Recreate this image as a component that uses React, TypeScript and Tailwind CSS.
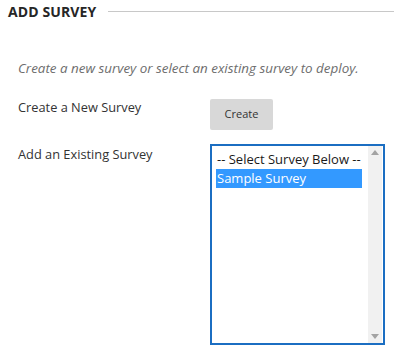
import React from 'react';

const font = { fontFamily: '"Open Sans", "Noto Sans", Arial, sans-serif' };

export default function App() {
  const [selected, setSelected] = React.useState(1);
  const options = ['-- Select Survey Below --', 'Sample Survey'];

  return (
    <div className="w-[394px] h-[355px] bg-white text-[#333]" style={font}>
      {/* Header */}
      <div className="flex items-center pl-[8px] pt-[3px]">
        <h2 className="text-[14px] font-bold uppercase leading-[17px] tracking-[0.1px] text-[#262626]">
          Add Survey
        </h2>
        <div className="ml-[12px] flex-1 h-px bg-[#c8c8c8]" />
      </div>

      <div className="pl-[18px] pt-[39px]">
        <p className="text-[13.4px] italic text-[#6d6d6d] leading-[18px]">
          Create a new survey or select an existing survey to deploy.
        </p>

        {/* Create row */}
        <div className="flex mt-[19px]">
          <div className="w-[192px] text-[12.8px] leading-[18px] pt-[2px]">Create a New Survey</div>
          <button className="w-[63px] h-[31px] rounded-[2px] bg-[#d8d8d8] text-[11px] text-[#333] mt-[3px]">
            Create
          </button>
        </div>

        {/* Existing row */}
        <div className="flex mt-[14px]">
          <div className="w-[192px] text-[12.8px] leading-[18px] pt-[1px]">Add an Existing Survey</div>
          <div className="w-[175px] h-[201px] border-2 border-[#1b6ec2] flex">
            <div className="flex-1 pt-[4px] pl-[4px] pr-[6px]">
              {options.map((o, i) => (
                <div
                  key={o}
                  onClick={() => setSelected(i)}
                  className={`text-[13px] leading-[19px] pl-px ${
                    selected === i ? 'bg-[#3399ff] text-white' : 'text-[#1a1a1a]'
                  }`}
                >
                  {o}
                </div>
              ))}
            </div>
            <div className="w-[14px] bg-[#f1f1f1] flex flex-col justify-between items-center py-[4px] mr-px">
              <svg width="8" height="5" viewBox="0 0 8 5">
                <path d="M4 0 L8 5 L0 5 Z" fill="#a3a3a3" />
              </svg>
              <svg width="8" height="5" viewBox="0 0 8 5">
                <path d="M0 0 L8 0 L4 5 Z" fill="#a3a3a3" />
              </svg>
            </div>
          </div>
        </div>
      </div>
    </div>
  );
}
